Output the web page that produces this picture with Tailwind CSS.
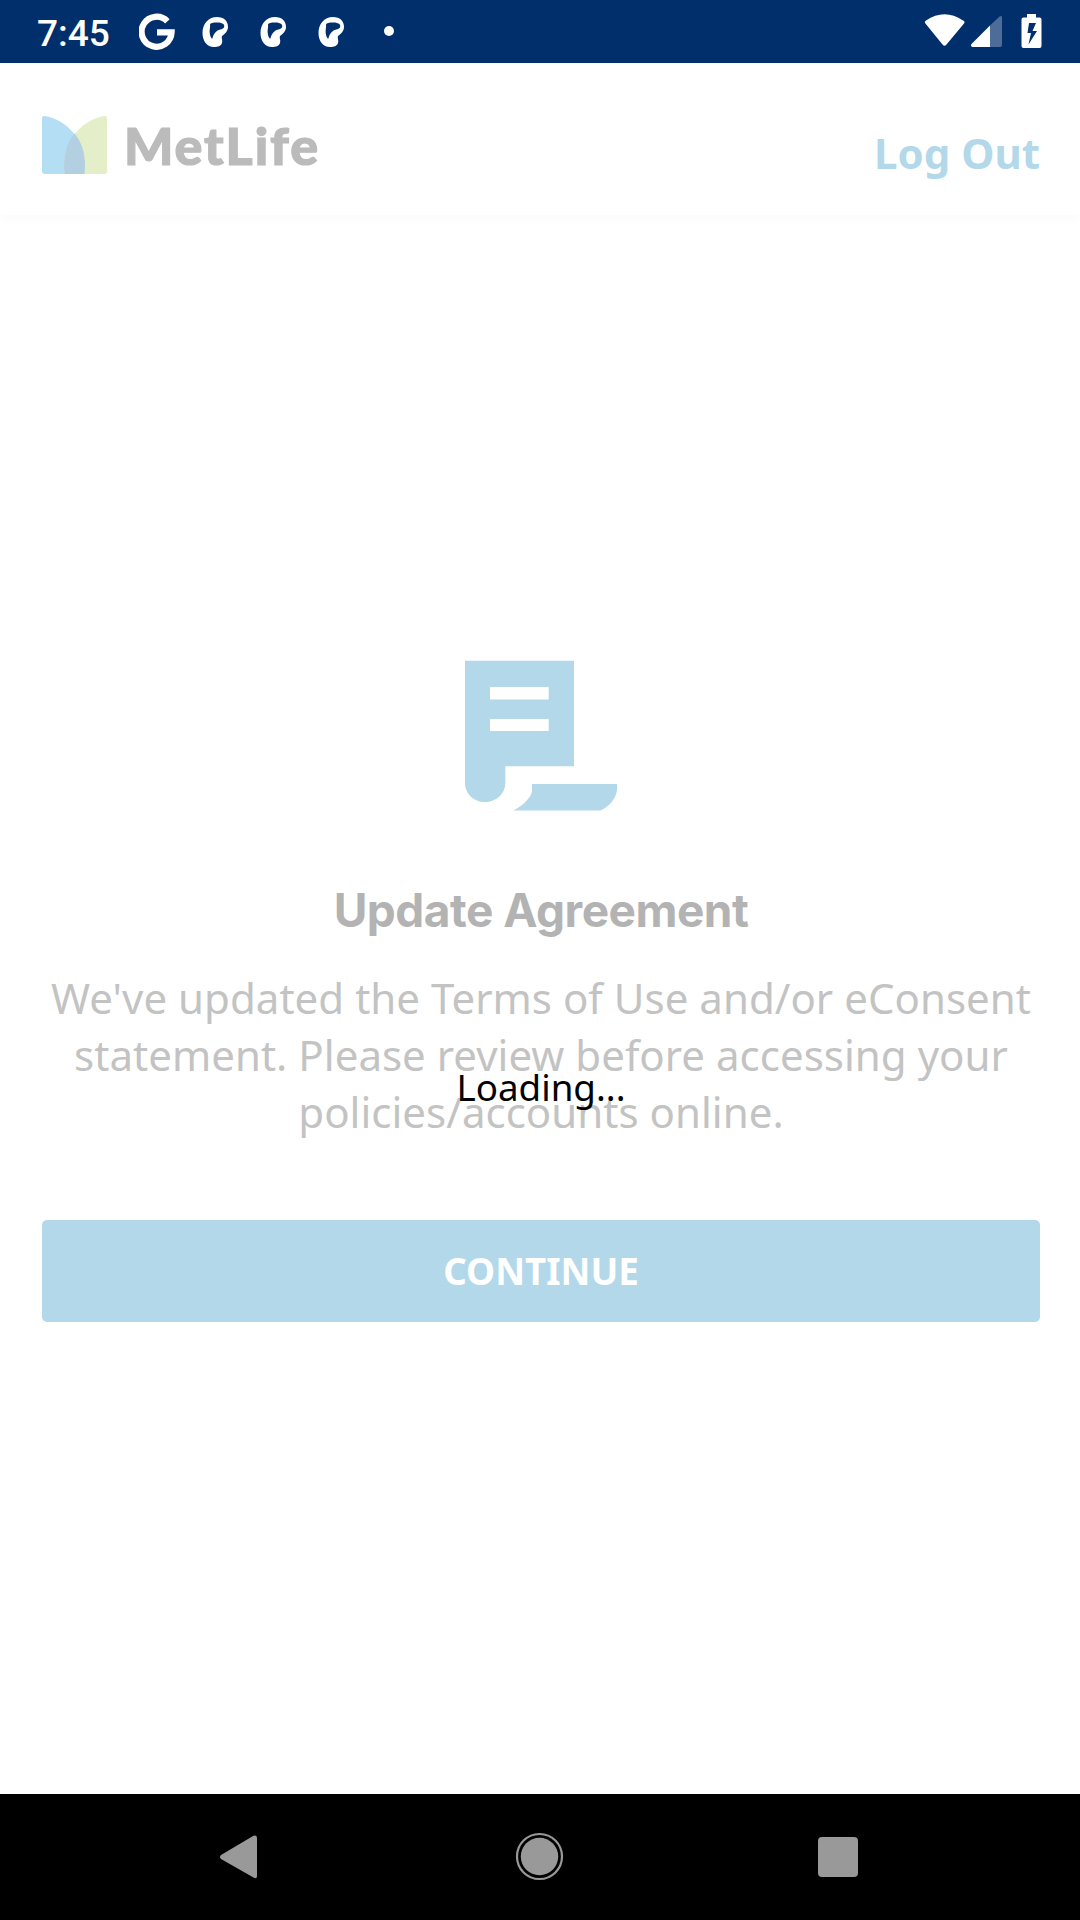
<!DOCTYPE html>
<html lang="en">
<head>
<meta charset="utf-8">
<title>MetLife</title>
<script src="https://cdn.jsdelivr.net/npm/@tailwindcss/browser@4"></script>
</head>
<body class="relative flex h-[1920px] w-[1080px] flex-col overflow-hidden bg-white font-['Noto_Sans',sans-serif]">
  <!-- Status bar -->
  <div class="flex h-[63px] shrink-0 items-start bg-[#002f6c] pl-[37px] text-white">
    <span class="w-[102px] pt-[13px] font-['Roboto',sans-serif] text-[37px] font-medium leading-[42px]">7:45</span>
    <svg class="h-[63px] w-[36px] shrink-0" viewBox="139 0 36 63" fill="none" stroke="#fff" stroke-width="6.2"><path d="M167.4 21.3A15 15 0 1 0 171.6 32.4H157"/></svg>
    <svg class="h-[63px] w-[225px] shrink-0" viewBox="175 0 225 63" fill="#fff">
      <defs><path id="blob" fill-rule="evenodd" d="M202.500 33C202.500 24 208 17 217 17C224 17 228 21 228 27C228 31 225 34 222 36C221 38 223 40 222 43C221 46 218 47 214 47C207 47 202.500 41 202.500 33ZM210 24.500C210.500 27 209.300 30 209.700 33C210 36 211.300 38.500 212.300 38.700C213 36 214 33 217.500 30.500C220 29.500 223 29 224 27.500C225 25 223.500 22.500 217 22.500C213 22.500 210.500 23 210 24.500Z"/></defs>
      <use href="#blob"/><use href="#blob" x="58"/><use href="#blob" x="116"/><circle cx="389" cy="31" r="5"/>
    </svg>
    <svg class="ml-auto h-[63px] w-[180px] shrink-0" viewBox="900 0 180 63" fill="#fff">
      <path d="M925 23Q924 21.500 926 20.500Q944.500 8 963 20.500Q965.500 21.500 964 23.500L946.500 44.500Q944.500 47 942.500 44.500Z"/>
      <path fill-opacity=".3" d="M990 25.500L999.500 16.500Q1002 15 1002 18V45Q1002 47 1000 47H990Z"/>
      <path d="M990 25.500V47H972.500Q970 46 971.500 44Z"/>
      <path fill-rule="evenodd" d="M1027 14H1036V17.500H1039.500Q1041.500 17.500 1041.500 19.500V46Q1041.500 48 1039.500 48H1023.500Q1021.500 48 1021.500 46V19.500Q1021.500 17.500 1023.500 17.500H1027ZM1029 23L1027.500 33H1031L1028.500 44.500L1037 31H1032.500L1036 23Z"/>
    </svg>
  </div>
  <!-- App header -->
  <header class="flex h-[152px] shrink-0 items-start bg-white pl-[42px] pr-[40px] shadow-[0_6px_10px_-2px_rgba(0,0,0,0.025)]">
    <svg class="mt-[53px] h-[58px] w-[65px]" viewBox="42 116 65 58">
      <path fill="#b4def4" d="M42 118.500Q42 115.500 45 116C63 119 85 136 85 166L84.500 174H45Q42 174 42 171Z"/>
      <path fill="#e4efca" d="M107 118.500Q107 115.500 104 116C86 119 64 136 64 166L64.500 174H104Q107 174 107 171Z"/>
      <path fill="#b3cfe2" d="M74.500 133.500C68 141 64 152 64 166L64.500 174H84.500L85 166C85 152 81 141 74.500 133.500Z"/>
    </svg>
    <span class="ml-[17px] mt-[51px] font-['Lato',sans-serif] text-[52px] font-black leading-[62px] tracking-[1.9px] text-[#bbb] [-webkit-text-stroke:1.2px_#bbb]">MetLife</span>
    <span class="ml-auto mt-[61px] text-[42px] font-bold leading-[57px] text-[#b3d8ea]">Log Out</span>
  </header>
  <!-- Agreement notice -->
  <main class="flex flex-1 flex-col items-center pl-[43px] pr-[41px] pt-[445px] text-center">
    <svg class="h-[151px] w-[154px] shrink-0" viewBox="464 660 154 151" fill="#b3d8ea">
      <path fill-rule="evenodd" d="M465 660.700H574V766.300H505.300V783C505.300 794 496 802 485 802C474 802 465 794 465 783ZM490 687V699.500H548.700V687ZM490 719V731H548.700V719Z"/>
      <path d="M532 784H617V789C617 798 608 808 600 810.500H513C520 808 532 798 532 790Z"/>
    </svg>
    <h1 class="mt-[69px] whitespace-nowrap font-['Inter',sans-serif] text-[46px] font-bold leading-[60px] tracking-[-0.5px] text-[#b3b3b3]">Update Agreement</h1>
    <p class="mt-[29px] whitespace-nowrap text-[42px] leading-[57px] tracking-[0.03px] text-[#c3c3c3]">We've updated the Terms of Use and/or eConsent<br>statement. Please review before accessing your<br>policies/accounts online.</p>
    <button class="mt-[80px] flex h-[102px] w-[998px] shrink-0 items-center justify-center rounded-[5px] bg-[#b3d8ea] pt-[2px] text-[36.75px] font-bold text-white">CONTINUE</button>
  </main>
  <!-- Navigation bar -->
  <nav class="h-[126px] shrink-0 bg-black">
    <svg class="block h-[126px] w-[1080px]" viewBox="0 1794 1080 126" fill="#999">
      <path d="M221 1855L253.500 1835.800Q257 1834.500 257 1838V1876Q257 1879.500 253.500 1877.500L221 1859Q219 1857 221 1855Z"/>
      <circle cx="539.500" cy="1856.500" r="18.700"/><circle cx="539.500" cy="1856.500" r="22.500" fill="none" stroke="#999" stroke-width="2.200"/>
      <rect x="818" y="1837" width="40" height="40" rx="4"/>
    </svg>
  </nav>
  <!-- Loading overlay -->
  <div class="absolute left-[1px] top-[1062px] w-[1080px] text-center text-[36.75px] leading-[50px] text-black">Loading...</div>
</body>
</html>
